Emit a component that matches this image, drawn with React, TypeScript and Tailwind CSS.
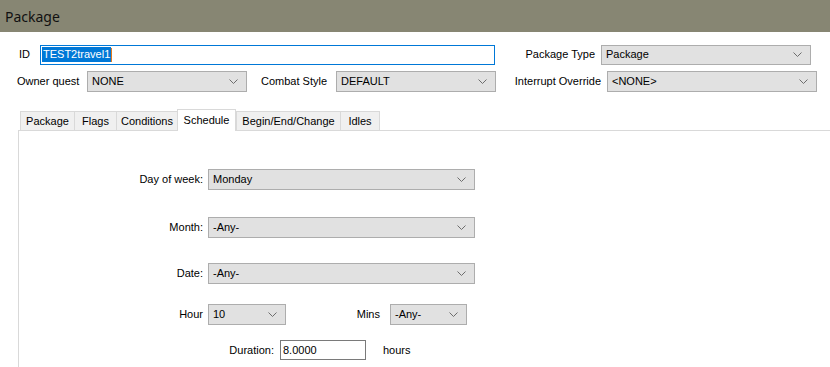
const font = { fontFamily: '"Liberation Sans", Arial, sans-serif' }

function Chevron() {
    return (
        <svg width="9" height="5" viewBox="0 0 9 5" className="shrink-0">
            <polyline points="0.5,0.5 4.5,4.5 8.5,0.5" fill="none" stroke="#6d6d6d" strokeWidth="1" />
        </svg>
    )
}

function Select({ value, width, height = 21 }: { value: string; width: number; height?: number }) {
    return (
        <div
            className="flex items-center justify-between bg-[#e1e1e1] border border-[#adadad] pl-[4px] pr-[8px] text-[11px] text-black shrink-0"
            style={{ width, height }}
        >
            <span>{value}</span>
            <Chevron />
        </div>
    )
}

const tabs = [
    { label: "Package", w: "w-[54px]" },
    { label: "Flags", w: "w-[42px]" },
    { label: "Conditions", w: "w-[61px]" },
    { label: "Schedule", w: "w-[59px]" },
    { label: "Begin/End/Change", w: "w-[104px]" },
    { label: "Idles", w: "w-[39px]" },
]

export default function App() {
    return (
        <div className="w-[830px] h-[367px] bg-white overflow-hidden text-[11px] text-black" style={font}>
            {/* Title bar */}
            <div className="h-[32px] bg-[#878673] flex items-center pl-[5px]">
                <span className="text-[14px] text-[#111]" style={{ fontFamily: '"Noto Sans", sans-serif' }}>Package</span>
            </div>

            {/* Header fields */}
            <div className="flex items-center h-[21px] mt-[12px]">
                <span className="pl-[19px] w-[40px]">ID</span>
                <div className="w-[455px] h-[20px] border border-[#0078d7] flex items-center pl-[1px]">
                    <span className="bg-[#0078d7] text-white px-[1px] leading-[15px]">TEST2travel1</span>
                    <span className="w-[1px] h-[14px] bg-[#e07a1f]" />
                </div>
                <span className="w-[106px] text-right pr-[6px]">Package Type</span>
                <Select value="Package" width={210} height={20} />
            </div>
            <div className="flex items-center h-[21px] mt-[6px]">
                <span className="pl-[17px] w-[87px]">Owner quest</span>
                <Select value="NONE" width={160} />
                <span className="w-[89px] text-right pr-[9px]">Combat Style</span>
                <Select value="DEFAULT" width={160} />
                <span className="w-[111px] text-right pr-[6px]">Interrupt Override</span>
                <Select value="<NONE>" width={210} />
            </div>

            {/* Tabs */}
            <div className="flex items-end h-[22px] mt-[16px] pl-[20px]">
                {tabs.map((t) =>
                    t.label === "Schedule" ? (
                        <div key={t.label} className={`${t.w} h-[22px] bg-white border border-b-0 border-[#d9d9d9] flex justify-center items-start pt-[2px] relative z-10 -mb-[1px]`}>
                            {t.label}
                        </div>
                    ) : (
                        <div key={t.label} className={`${t.w} h-[19px] bg-[#f0f0f0] border border-r-0 border-b-0 border-[#d9d9d9] flex justify-center items-center`}>
                            {t.label}
                        </div>
                    )
                )}
                <div className="h-[19px] border-l border-[#d9d9d9]" />
            </div>

            {/* Panel */}
            <div className="ml-[18px] border-l border-t border-[#d9d9d9] h-[240px] flex flex-col">
                <div className="flex items-center mt-[38px]">
                    <span className="w-[189px] text-right pr-[5px]">Day of week:</span>
                    <Select value="Monday" width={267} />
                </div>
                <div className="flex items-center mt-[27px]">
                    <span className="w-[189px] text-right pr-[5px]">Month:</span>
                    <Select value="-Any-" width={267} />
                </div>
                <div className="flex items-center mt-[25px]">
                    <span className="w-[189px] text-right pr-[5px]">Date:</span>
                    <Select value="-Any-" width={267} />
                </div>
                <div className="flex items-center mt-[20px]">
                    <span className="w-[189px] text-right pr-[5px]">Hour</span>
                    <Select value="10" width={78} />
                    <span className="w-[104px] text-right pr-[10px]">Mins</span>
                    <Select value="-Any-" width={77} />
                </div>
                <div className="flex items-center mt-[15px]">
                    <span className="w-[261px] text-right pr-[6px]">Duration:</span>
                    <div className="w-[86px] h-[20px] border border-[#7a7a7a] flex items-center pl-[2px]">8.0000</div>
                    <span className="pl-[17px]">hours</span>
                </div>
            </div>
        </div>
    )
}
